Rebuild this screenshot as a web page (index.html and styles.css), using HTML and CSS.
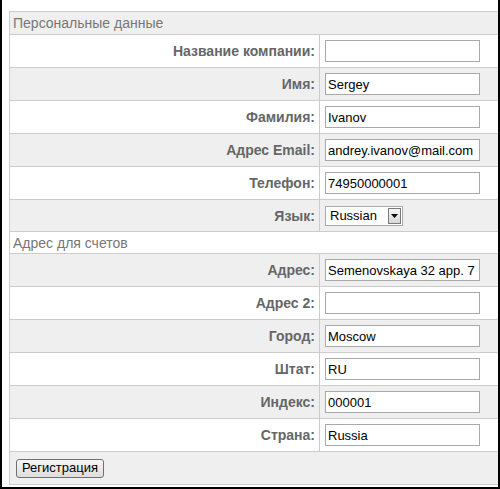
FILE: index.html
```html
<!DOCTYPE html>
<html>
<head>
<meta charset="utf-8">
<link rel="stylesheet" href="styles.css">
</head>
<body>
<div class="frame">
  <form class="form">
    <div class="section">Персональные данные</div>
    <div class="row white"><label class="lbl">Название компании:</label><div class="fld"><input class="inp" type="text" value=""></div></div>
    <div class="row gray"><label class="lbl">Имя:</label><div class="fld"><input class="inp" type="text" value="Sergey"></div></div>
    <div class="row white"><label class="lbl">Фамилия:</label><div class="fld"><input class="inp" type="text" value="Ivanov"></div></div>
    <div class="row gray"><label class="lbl">Адрес Email:</label><div class="fld"><input class="inp" type="text" value="andrey.ivanov@mail.com"></div></div>
    <div class="row white"><label class="lbl">Телефон:</label><div class="fld"><input class="inp" type="text" value="74950000001"></div></div>
    <div class="row gray short"><label class="lbl">Язык:</label><div class="fld">
      <span class="sel"><span class="sel-text">Russian</span><span class="sel-btn"><svg width="7" height="4" viewBox="0 0 7 4"><path d="M0 0H7L3.5 4Z" fill="#000"/></svg></span></span>
    </div></div>
    <div class="section second">Адрес для счетов</div>
    <div class="row gray"><label class="lbl">Адрес:</label><div class="fld"><input class="inp" type="text" value="Semenovskaya 32 app. 7"></div></div>
    <div class="row white"><label class="lbl">Адрес 2:</label><div class="fld"><input class="inp" type="text" value=""></div></div>
    <div class="row gray"><label class="lbl">Город:</label><div class="fld"><input class="inp" type="text" value="Moscow"></div></div>
    <div class="row white"><label class="lbl">Штат:</label><div class="fld"><input class="inp" type="text" value="RU"></div></div>
    <div class="row gray"><label class="lbl">Индекс:</label><div class="fld"><input class="inp" type="text" value="000001"></div></div>
    <div class="row white"><label class="lbl">Страна:</label><div class="fld"><input class="inp" type="text" value="Russia"></div></div>
    <div class="actions"><button class="btn" type="button">Регистрация</button></div>
  </form>
</div>
</body>
</html>
```

FILE: styles.css
```css
html, body {
  margin: 0;
  padding: 0;
  background: #fff;
}
.frame {
  width: 500px;
  height: 489px;
  box-sizing: border-box;
  border: 2px solid #000;
  border-top: 0;
  padding: 11px 0 0 7px;
  overflow: hidden;
  font-family: "Liberation Sans", Arial, sans-serif;
  font-size: 13px;
}
.form {
  margin: 0;
  width: 491px;
  border-top: 1px solid #ccc;
  border-left: 1px solid #ccc;
}
.section {
  height: 23px;
  box-sizing: border-box;
  border-bottom: 1px solid #ccc;
  background: #efefef;
  color: #777;
  font-size: 14px;
  padding-left: 3px;
  display: flex;
  align-items: center;
}
.section.second {
  height: 22px;
  background: #fff;
}
.row {
  height: 33px;
  box-sizing: border-box;
  border-bottom: 1px solid #ccc;
  display: flex;
}
.row.short { height: 32px; }
.white { background: #fff; }
.gray { background: #efefef; }
.lbl {
  width: 310px;
  box-sizing: border-box;
  border-right: 1px solid #ccc;
  padding-right: 4px;
  display: flex;
  align-items: center;
  justify-content: flex-end;
  font-weight: bold;
  font-size: 14px;
  color: #666;
}
.fld {
  flex: 1;
  display: flex;
  align-items: center;
  padding-left: 5px;
}
.inp {
  width: 155px;
  height: 22px;
  box-sizing: border-box;
  border: 1px solid #a9a9a9;
  padding: 1px 2px;
  margin: 0;
  font-family: "Liberation Sans", Arial, sans-serif;
  font-size: 13px;
  color: #000;
  background: #fff;
  outline: none;
}
.sel {
  display: flex;
  align-items: center;
  width: 78px;
  height: 20px;
  box-sizing: border-box;
  border: 1px solid #a9a9a9;
  background: #fff;
  padding: 1px;
}
.sel-text {
  flex: 1;
  padding-left: 3px;
  color: #000;
}
.sel-btn {
  width: 13px;
  height: 16px;
  box-sizing: border-box;
  border: 1px solid #7a7a7a;
  background: linear-gradient(#f4f4f4, #d8d8d8);
  display: flex;
  align-items: center;
  justify-content: center;
}
.actions {
  height: 33px;
  box-sizing: border-box;
  border-bottom: 1px solid #ccc;
  background: #efefef;
  display: flex;
  align-items: center;
  padding-left: 6px;
}
.btn {
  height: 19px;
  width: 88px;
  box-sizing: border-box;
  margin: 0;
  padding: 0 4px;
  border: 1px solid #707070;
  border-radius: 3px;
  background: linear-gradient(#f6f6f6, #dddddd);
  font-family: "Liberation Sans", Arial, sans-serif;
  font-size: 13px;
  color: #000;
  line-height: 16px;
}
```
